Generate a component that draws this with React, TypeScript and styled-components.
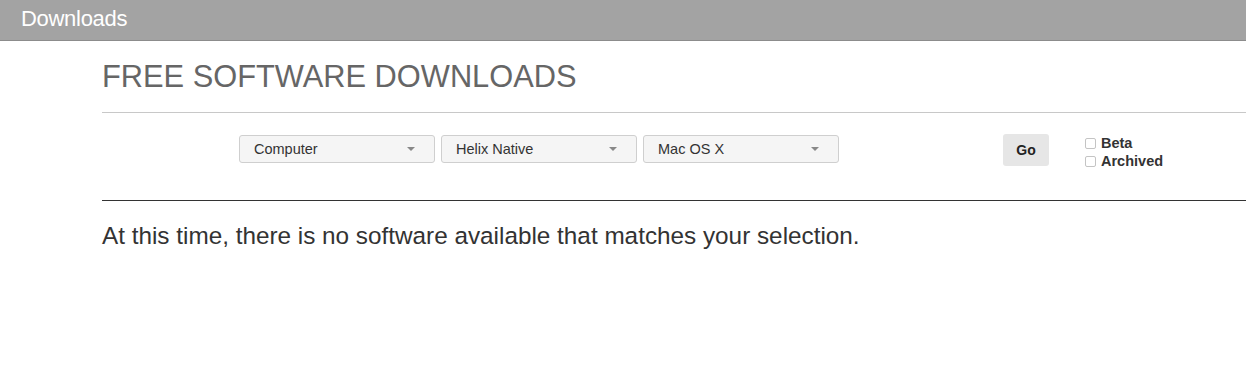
import styled, { createGlobalStyle } from "styled-components";

const GlobalStyle = createGlobalStyle`
  body {
    margin: 0;
    background: #fff;
    font-family: "Liberation Sans", Arial, sans-serif;
  }
`;

const TopBar = styled.header`
  height: 41px;
  background-color: #a3a3a3;
  border-bottom: 1px solid #8c8c8c;
  display: flex;
  align-items: center;
  padding-left: 21px;
  box-sizing: border-box;
`;

const TopTitle = styled.h2`
  margin: 0 0 2px;
  font-size: 22px;
  font-weight: 400;
  color: #fff;
  letter-spacing: -0.3px;
`;

const Content = styled.main`
  padding-left: 102px;
`;

const Title = styled.h1`
  margin: 0;
  padding: 18px 0 17px;
  font-size: 30.8px;
  font-weight: 400;
  color: #666;
  border-bottom: 1px solid #c8c8c8;
  line-height: 36px;
`;

const FilterBar = styled.form`
  display: flex;
  align-items: flex-start;
  height: 88px;
  border-bottom: 1px solid #333;
  padding: 21px 0 0 137px;
  box-sizing: border-box;
`;

const Selects = styled.div`
  display: flex;
  gap: 6px;
  margin-top: 1px;
`;

const Select = styled.div`
  width: 196px;
  height: 28px;
  box-sizing: border-box;
  display: flex;
  align-items: center;
  justify-content: space-between;
  padding: 0 19px 0 14px;
  background: #f5f5f5;
  border: 1px solid #cfcfcf;
  border-radius: 3px;
  font-size: 14.5px;
  color: #333;
`;

const Caret = styled.span`
  width: 0;
  height: 0;
  border-left: 4px solid transparent;
  border-right: 4px solid transparent;
  border-top: 4px solid #888;
`;

const GoButton = styled.button`
  margin-left: 164px;
  width: 46px;
  height: 32px;
  border: none;
  border-radius: 3px;
  background: #e6e6e6;
  font-family: inherit;
  font-size: 14px;
  font-weight: 700;
  color: #222;
  padding: 0;
`;

const Checks = styled.div`
  margin-left: 36px;
  margin-top: 2px;
  display: flex;
  flex-direction: column;
  gap: 4px;
`;

const CheckRow = styled.label`
  display: flex;
  align-items: center;
  gap: 5px;
  font-size: 14.5px;
  font-weight: 700;
  color: #333;
  line-height: 14px;
`;

const Box = styled.span`
  width: 11px;
  height: 11px;
  box-sizing: border-box;
  border: 1px solid #c4c4c4;
  border-radius: 2px;
  background: #fff;
`;

const Message = styled.p`
  margin: 21px 0 0;
  font-size: 24.3px;
  line-height: 28px;
  color: #333;
`;

const App = () => {
  const selects = ["Computer", "Helix Native", "Mac OS X"];
  return (
    <>
      <GlobalStyle />
      <TopBar>
        <TopTitle>Downloads</TopTitle>
      </TopBar>
      <Content>
        <Title>FREE SOFTWARE DOWNLOADS</Title>
        <FilterBar>
          <Selects>
            {selects.map((s) => (
              <Select key={s}>
                {s}
                <Caret />
              </Select>
            ))}
          </Selects>
          <GoButton type="button">Go</GoButton>
          <Checks>
            <CheckRow><Box />Beta</CheckRow>
            <CheckRow><Box />Archived</CheckRow>
          </Checks>
        </FilterBar>
        <Message>At this time, there is no software available that matches your selection.</Message>
      </Content>
    </>
  );
};

export default App;
